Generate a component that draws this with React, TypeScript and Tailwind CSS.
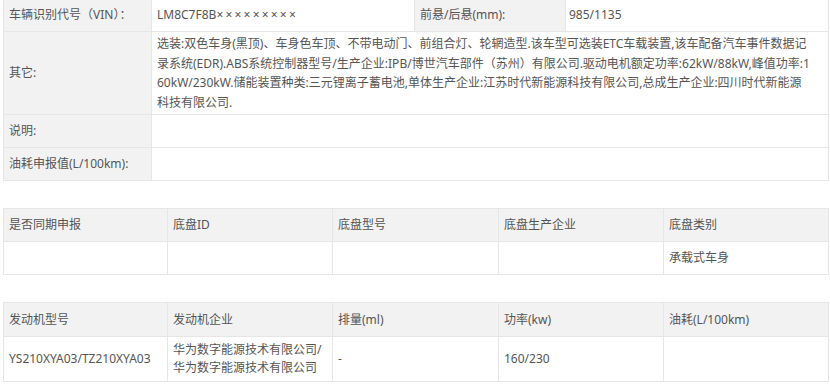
import React from "react";

const cell = "border border-[#e6e6e6] px-[5px] align-middle";
const head = "bg-[#f2f2f2]";

export default function App() {
  return (
    <div
      className="w-[830px] h-[387px] bg-white overflow-hidden pl-[3px] text-[12px] text-[#555555]"
      style={{ fontFamily: '"Noto Sans", "Noto Sans CJK SC", sans-serif' }}
    >
      <table className="table-fixed border-collapse w-[825px] -mt-[2px]">
        <colgroup>
          <col className="w-[148px]" />
          <col className="w-[263px]" />
          <col className="w-[151px]" />
          <col className="w-[263px]" />
        </colgroup>
        <tbody>
          <tr className="h-[33px]">
            <td className={`${cell} ${head}`}>车辆识别代号（VIN）：</td>
            <td className={cell}>
              LM8C7F8B<span className="tracking-[2.2px]">×××××××××</span>
            </td>
            <td className={`${cell} ${head}`}>前悬/后悬(mm):</td>
            <td className={`${cell} pl-[3px]`}>985/1135</td>
          </tr>
          <tr className="h-[83px]">
            <td className={`${cell} ${head}`}>其它:</td>
            <td className={`${cell} leading-[19.5px] whitespace-nowrap`} colSpan={3}>
              <div>选装:双色车身(黑顶)、车身色车顶、不带电动门、前组合灯、轮辋造型.该车型可选装ETC车载装置,该车配备汽车事件数据记</div>
              <div>录系统(EDR).ABS系统控制器型号/生产企业:IPB/博世汽车部件（苏州）有限公司.驱动电机额定功率:62kW/88kW,峰值功率:1</div>
              <div>60kW/230kW.储能装置种类:三元锂离子蓄电池,单体生产企业:江苏时代新能源科技有限公司,总成生产企业:四川时代新能源</div>
              <div>科技有限公司.</div>
            </td>
          </tr>
          <tr className="h-[33px]">
            <td className={`${cell} ${head}`}>说明:</td>
            <td className={cell} colSpan={3}></td>
          </tr>
          <tr className="h-[33px]">
            <td className={`${cell} ${head}`}>油耗申报值(L/100km):</td>
            <td className={cell} colSpan={3}></td>
          </tr>
        </tbody>
      </table>

      <table className="table-fixed border-collapse w-[825px] mt-[27px]">
        <colgroup>
          <col className="w-[164px]" />
          <col className="w-[165px]" />
          <col className="w-[166px]" />
          <col className="w-[165px]" />
          <col className="w-[165px]" />
        </colgroup>
        <tbody>
          <tr className={`h-[33px] ${head}`}>
            <td className={cell}>是否同期申报</td>
            <td className={cell}>底盘ID</td>
            <td className={cell}>底盘型号</td>
            <td className={cell}>底盘生产企业</td>
            <td className={cell}>底盘类别</td>
          </tr>
          <tr className="h-[33px]">
            <td className={cell}></td>
            <td className={cell}></td>
            <td className={cell}></td>
            <td className={cell}></td>
            <td className={cell}>承载式车身</td>
          </tr>
        </tbody>
      </table>

      <table className="table-fixed border-collapse w-[825px] mt-[27px]">
        <colgroup>
          <col className="w-[164px]" />
          <col className="w-[165px]" />
          <col className="w-[166px]" />
          <col className="w-[165px]" />
          <col className="w-[165px]" />
        </colgroup>
        <tbody>
          <tr className={`h-[34px] ${head}`}>
            <td className={cell}>发动机型号</td>
            <td className={cell}>发动机企业</td>
            <td className={cell}>排量(ml)</td>
            <td className={cell}>功率(kw)</td>
            <td className={cell}>油耗(L/100km)</td>
          </tr>
          <tr className="h-[45px]">
            <td className={`${cell} whitespace-nowrap`}>YS210XYA03/TZ210XYA03</td>
            <td className={`${cell} leading-[18px]`}>
              <div>华为数字能源技术有限公司/</div>
              <div>华为数字能源技术有限公司</div>
            </td>
            <td className={cell}>-</td>
            <td className={cell}>160/230</td>
            <td className={cell}></td>
          </tr>
        </tbody>
      </table>
    </div>
  );
}
